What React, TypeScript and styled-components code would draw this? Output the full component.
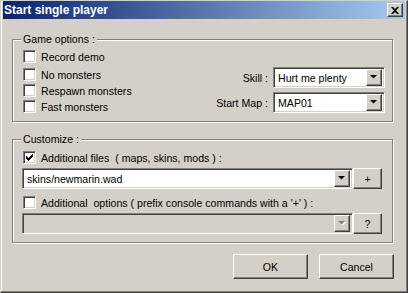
import React from 'react';
import styled, { createGlobalStyle } from 'styled-components';

const Global = createGlobalStyle`
  html, body { margin: 0; padding: 0; background: #D4D0C8; }
  body { font-family: "Liberation Sans", Arial, sans-serif; font-size: 10.6px; color: #000; }
  * { box-sizing: border-box; }
`;

const Window = styled.div`
  width: 408px;
  height: 293px;
  background: #D4D0C8;
  display: flex;
  flex-direction: column;
  border-top: 1px solid #D4D0C8;
  border-left: 1px solid #D4D0C8;
  border-right: 1px solid #404040;
  border-bottom: 1px solid #404040;
  box-shadow: inset -1px -1px 0 #808080, inset 1px 1px 0 #fff;
  padding: 0 2px 2px 1px;
`;

const TitleBar = styled.div`
  height: 18px;
  margin-left: 1px;
  background: linear-gradient(to right, #0A246A, #A6CAF0);
  display: flex;
  align-items: center;
  justify-content: space-between;
  padding: 0 2px 0 1px;
`;

const TitleText = styled.span`
  color: #fff;
  font-weight: bold;
  font-size: 12px;
`;

const Raised = styled.div`
  background: #D4D0C8;
  border-top: 1px solid #fff;
  border-left: 1px solid #fff;
  border-right: 1px solid #404040;
  border-bottom: 1px solid #404040;
  box-shadow: inset -1px -1px 0 #808080, inset 1px 1px 0 #D4D0C8;
  display: flex;
  align-items: center;
  justify-content: center;
`;

const CloseButton = styled(Raised)`
  width: 16px;
  height: 14px;
`;

const Body = styled.div`
  flex: 1;
  display: flex;
  flex-direction: column;
  padding: 20px 12px 0 10px;
`;

const Group = styled.div<{ $h: number; $mt?: number }>`
  position: relative;
  height: ${(p) => p.$h}px;
  margin-top: ${(p) => p.$mt ?? 0}px;
  border: 1px solid #808080;
  box-shadow: inset 1px 1px 0 #fff, 1px 1px 0 #fff;
`;

const Legend = styled.span`
  position: absolute;
  top: -7px;
  left: 8px;
  padding: 0 2px;
  background: #D4D0C8;
  line-height: 13px;
`;

const GameBody = styled.div`
  display: flex;
  justify-content: space-between;
  padding: 10px 7px 0 10px;
`;

const CheckCol = styled.div`
  display: flex;
  flex-direction: column;
  gap: 3px;
`;

const CheckRow = styled.label<{ $mb?: number }>`
  display: flex;
  align-items: center;
  gap: 5px;
  height: 13px;
  margin-bottom: ${(p) => p.$mb ?? 0}px;
  white-space: pre;
`;

const Sunken = styled.div`
  background: #fff;
  border-top: 1px solid #808080;
  border-left: 1px solid #808080;
  border-right: 1px solid #fff;
  border-bottom: 1px solid #fff;
  box-shadow: inset 1px 1px 0 #404040, inset -1px -1px 0 #D4D0C8;
`;

const Box = styled(Sunken)`
  width: 13px;
  height: 13px;
  display: flex;
  align-items: center;
  justify-content: center;
  flex: none;
`;

const FieldCol = styled.div`
  display: flex;
  flex-direction: column;
  gap: 4px;
  padding-top: 17px;
`;

const FieldRow = styled.div`
  display: flex;
  align-items: center;
  justify-content: flex-end;
  gap: 5px;
`;

const Combo = styled(Sunken)<{ $w: number; $disabled?: boolean }>`
  width: ${(p) => p.$w}px;
  height: 21px;
  display: flex;
  align-items: center;
  padding: 2px;
  background: ${(p) => (p.$disabled ? '#D4D0C8' : '#fff')};
`;

const ComboText = styled.span`
  flex: 1;
  padding-left: 2px;
  white-space: nowrap;
  overflow: hidden;
`;

const ArrowButton = styled(Raised)`
  width: 16px;
  height: 17px;
  flex: none;
`;

const CustomBody = styled.div`
  display: flex;
  flex-direction: column;
  padding: 11px 10px 0 10px;
`;

const InputRow = styled.div<{ $mb?: number }>`
  display: flex;
  align-items: center;
  margin: 4px 0 ${(p) => p.$mb ?? 0}px -1px;
`;

const SmallButton = styled(Raised)`
  width: 29px;
  height: 21px;
`;

const ButtonRow = styled.div`
  display: flex;
  justify-content: flex-end;
  gap: 11px;
  margin-top: 11px;
  margin-right: -1px;
`;

const PushButton = styled(Raised)`
  width: 75px;
  height: 25px;
`;

const Check = () => (
  <svg width="7" height="7" viewBox="0 0 7 7">
    <path d="M0 2h1v1h1v1h1v-1h1v-1h1v-1h1v-1h1v3h-1v1h-1v1h-1v1h-1v1h-1v-1h-1v-1h-1z" fill="#000" />
  </svg>
);

const Arrow = ({ disabled }: { disabled?: boolean }) => (
  <svg width="8" height="5" viewBox="0 0 8 5">
    {disabled && <path d="M1 1h7l-3.5 3.5z" fill="#fff" />}
    <path d="M0 0h7l-3.5 3.5z" fill={disabled ? '#808080' : '#000'} />
  </svg>
);

const CloseX = () => (
  <svg width="8" height="7" viewBox="0 0 8 7">
    <path d="M0 0h2l2 2 2-2h2l-3 3.5 3 3.5h-2l-2-2-2 2h-2l3-3.5z" fill="#000" />
  </svg>
);

export default function App() {
  return (
    <>
      <Global />
      <Window>
        <TitleBar>
          <TitleText>Start single player</TitleText>
          <CloseButton>
            <CloseX />
          </CloseButton>
        </TitleBar>
        <Body>
          <Group $h={83}>
            <Legend>Game options :</Legend>
            <GameBody>
              <CheckCol>
                <CheckRow $mb={2}>
                  <Box />
                  Record demo
                </CheckRow>
                <CheckRow>
                  <Box />
                  No monsters
                </CheckRow>
                <CheckRow>
                  <Box />
                  Respawn monsters
                </CheckRow>
                <CheckRow>
                  <Box />
                  Fast monsters
                </CheckRow>
              </CheckCol>
              <FieldCol>
                <FieldRow>
                  <span>Skill :</span>
                  <Combo $w={112}>
                    <ComboText>Hurt me plenty</ComboText>
                    <ArrowButton>
                      <Arrow />
                    </ArrowButton>
                  </Combo>
                </FieldRow>
                <FieldRow>
                  <span>Start Map :</span>
                  <Combo $w={112}>
                    <ComboText>MAP01</ComboText>
                    <ArrowButton>
                      <Arrow />
                    </ArrowButton>
                  </Combo>
                </FieldRow>
              </FieldCol>
            </GameBody>
          </Group>
          <Group $h={104} $mt={17}>
            <Legend>Customize :</Legend>
            <CustomBody>
              <CheckRow>
                <Box>
                  <Check />
                </Box>
                {'Additional files  ( maps, skins, mods ) :'}
              </CheckRow>
              <InputRow $mb={7}>
                <Combo $w={332}>
                  <ComboText>skins/newmarin.wad</ComboText>
                  <ArrowButton>
                    <Arrow />
                  </ArrowButton>
                </Combo>
                <SmallButton>+</SmallButton>
              </InputRow>
              <CheckRow>
                <Box />
                {"Additional  options ( prefix console commands with a '+' ) :"}
              </CheckRow>
              <InputRow>
                <Combo $w={332} $disabled>
                  <ComboText />
                  <ArrowButton>
                    <Arrow disabled />
                  </ArrowButton>
                </Combo>
                <SmallButton>?</SmallButton>
              </InputRow>
            </CustomBody>
          </Group>
          <ButtonRow>
            <PushButton>OK</PushButton>
            <PushButton>Cancel</PushButton>
          </ButtonRow>
        </Body>
      </Window>
    </>
  );
}
